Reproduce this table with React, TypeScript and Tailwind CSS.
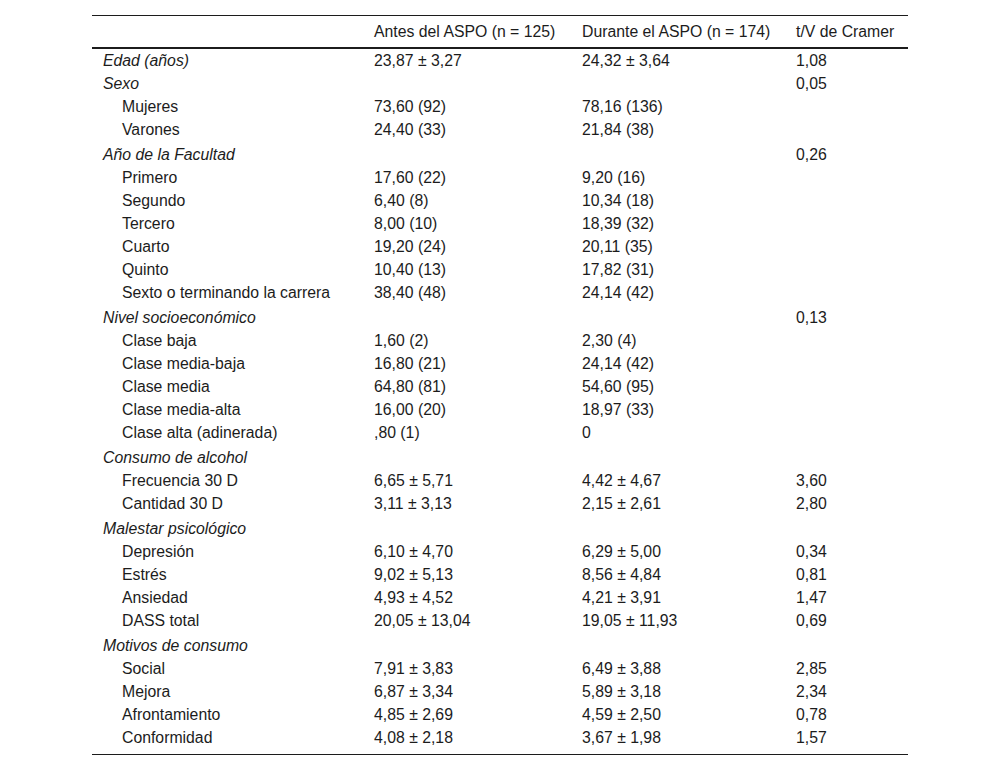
import React from "react";

type Row = { label: string; a?: string; b?: string; c?: string; group?: boolean; gap?: boolean };

const rows: Row[] = [
  { label: "Edad (años)", a: "23,87 ± 3,27", b: "24,32 ± 3,64", c: "1,08", group: true },
  { label: "Sexo", c: "0,05", group: true },
  { label: "Mujeres", a: "73,60 (92)", b: "78,16 (136)" },
  { label: "Varones", a: "24,40 (33)", b: "21,84 (38)" },
  { label: "Año de la Facultad", c: "0,26", group: true, gap: true },
  { label: "Primero", a: "17,60 (22)", b: "9,20 (16)" },
  { label: "Segundo", a: "6,40 (8)", b: "10,34 (18)" },
  { label: "Tercero", a: "8,00 (10)", b: "18,39 (32)" },
  { label: "Cuarto", a: "19,20 (24)", b: "20,11 (35)" },
  { label: "Quinto", a: "10,40 (13)", b: "17,82 (31)" },
  { label: "Sexto o terminando la carrera", a: "38,40 (48)", b: "24,14 (42)" },
  { label: "Nivel socioeconómico", c: "0,13", group: true, gap: true },
  { label: "Clase baja", a: "1,60 (2)", b: "2,30 (4)" },
  { label: "Clase media-baja", a: "16,80 (21)", b: "24,14 (42)" },
  { label: "Clase media", a: "64,80 (81)", b: "54,60 (95)" },
  { label: "Clase media-alta", a: "16,00 (20)", b: "18,97 (33)" },
  { label: "Clase alta (adinerada)", a: ",80 (1)", b: "0" },
  { label: "Consumo de alcohol", group: true, gap: true },
  { label: "Frecuencia 30 D", a: "6,65 ± 5,71", b: "4,42 ± 4,67", c: "3,60" },
  { label: "Cantidad 30 D", a: "3,11 ± 3,13", b: "2,15 ± 2,61", c: "2,80" },
  { label: "Malestar psicológico", group: true, gap: true },
  { label: "Depresión", a: "6,10 ± 4,70", b: "6,29 ± 5,00", c: "0,34" },
  { label: "Estrés", a: "9,02 ± 5,13", b: "8,56 ± 4,84", c: "0,81" },
  { label: "Ansiedad", a: "4,93 ± 4,52", b: "4,21 ± 3,91", c: "1,47" },
  { label: "DASS total", a: "20,05 ± 13,04", b: "19,05 ± 11,93", c: "0,69" },
  { label: "Motivos de consumo", group: true, gap: true },
  { label: "Social", a: "7,91 ± 3,83", b: "6,49 ± 3,88", c: "2,85" },
  { label: "Mejora", a: "6,87 ± 3,34", b: "5,89 ± 3,18", c: "2,34" },
  { label: "Afrontamiento", a: "4,85 ± 2,69", b: "4,59 ± 2,50", c: "0,78" },
  { label: "Conformidad", a: "4,08 ± 2,18", b: "3,67 ± 1,98", c: "1,57" },
];

const grid = "grid grid-cols-[271px_208px_214px_123px]";

export default function App() {
  return (
    <div
      className="bg-white min-h-[770px] w-[1000px] pt-[15px] text-[15.8px] text-[#1c1c1c]"
      style={{ fontFamily: '"Liberation Sans", Arial, sans-serif' }}
    >
      <div className="ml-[92px] w-[816px] border-b border-[#1c1c1c] pb-[5px]">
        <div className={`${grid} border-t border-b-2 border-[#1c1c1c] h-[34px] items-center leading-[23px]`}>
          <div className="pl-[11px]"></div>
          <div className="pl-[11px] whitespace-nowrap">Antes del ASPO (n = 125)</div>
          <div className="pl-[11px] whitespace-nowrap">Durante el ASPO (n = 174)</div>
          <div className="pl-[11px] whitespace-nowrap">t/V de Cramer</div>
        </div>
        {rows.map((r, i) => (
          <div
            key={i}
            className={`${grid} leading-[23px] h-[23px] whitespace-nowrap ${r.gap ? "mt-[2px]" : ""}`}
          >
            <div className={r.group ? "pl-[11px] italic" : "pl-[30px]"}>{r.label}</div>
            <div className="pl-[11px]">{r.a ?? ""}</div>
            <div className="pl-[11px]">{r.b ?? ""}</div>
            <div className="pl-[11px]">{r.c ?? ""}</div>
          </div>
        ))}
      </div>
    </div>
  );
}
